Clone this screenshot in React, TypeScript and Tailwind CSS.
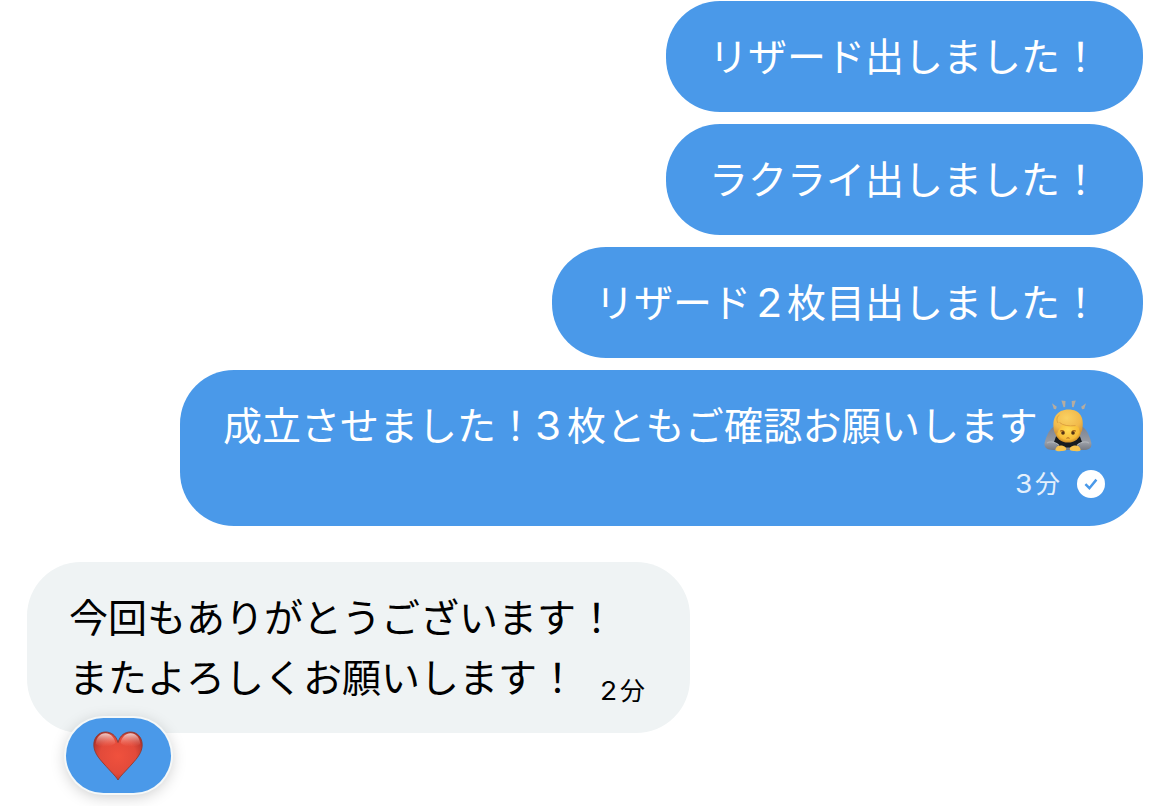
import type { ReactNode } from 'react'

function Digit({ children, className }: { children: ReactNode; className: string }) {
  return <span className={`inline-block origin-left scale-x-108 font-['Inter'] ${className}`}>{children}</span>
}

function SentBubble({ children, className }: { children: ReactNode; className: string }) {
  return (
    <div className={`rounded-[54px] bg-[#4a99e9] pl-[43px] text-[39px] text-white ${className}`}>
      {children}
    </div>
  )
}

function BowingEmoji() {
  return (
    <svg width="48" height="52" viewBox="0 0 48 52" className="shrink-0" aria-hidden="true">
      <defs>
        <radialGradient id="hair" cx="0.45" cy="0.35" r="0.75">
          <stop offset="0" stopColor="#fad162" />
          <stop offset="0.65" stopColor="#f1b94b" />
          <stop offset="1" stopColor="#d09338" />
        </radialGradient>
        <radialGradient id="skin" cx="0.5" cy="0.45" r="0.6">
          <stop offset="0" stopColor="#ffdb55" />
          <stop offset="0.7" stopColor="#f6bb37" />
          <stop offset="1" stopColor="#b97722" />
        </radialGradient>
        <linearGradient id="sleeve" x1="0" y1="0" x2="0" y2="1">
          <stop offset="0" stopColor="#7b8290" />
          <stop offset="0.7" stopColor="#999da5" />
          <stop offset="1" stopColor="#747983" />
        </linearGradient>
      </defs>
      <g fill="#b5aca0">
        <path d="M8 3.3l4.8 3.4-.8 2.6-2.2-.4z" />
        <path d="M17.4.5l4.1.4-.4 6.2-1.6.2z" />
        <path d="M27.7.9l4.1-.4-2.1 6.8-1.6-.2z" />
        <path d="M42 3.3l-4.8 3.4.8 2.6 2.2-.4z" />
      </g>
      <path d="M11 26C6 28 2.5 35 .6 43c-.8 5 2.7 7 8 7h30.8c5.5 0 8.7-2 7.9-7C45.5 35 42 28 37 26z" fill="url(#sleeve)" />
      <path d="M12 36.5h24l2 5.5-6 5.5H16L10 42z" fill="#171b20" />
      <path d="M3 43c4-2 8-1 12 2.5M45 43c-4-2-8-1-12 2.5" stroke="#aeb2b8" strokeWidth="1.2" fill="none" />
      <ellipse cx="24" cy="31" rx="13" ry="11.5" fill="url(#skin)" />
      <path
        d="M10.4 32C7 18 13 9.5 24.5 9.5S41 18 38 30.5c-.6 2.6-2 2-2.6-.7-.4-2.7-1.8-3.8-4.6-4-5.5-.1-9.5-.8-12.8-1-.2 2.5-3.3 4-4.2 7.2-.6 2.2-2.8 2.2-3.4 0z"
        fill="url(#hair)"
      />
      <path d="M14 23c-2-3.4-1-6.4 1.4-8M15.5 22.5c3.5 3 9 3.9 16 3.1" stroke="#d6973b" strokeWidth="0.8" fill="none" />
      <path d="M16.2 31.2c1.5-.8 3-.4 4 .8M31.8 31.2c-1.5-.8-3-.4-4 .8" stroke="#a76316" strokeWidth="1.2" fill="none" />
      <ellipse cx="19" cy="33" rx="1.8" ry="1.8" fill="#543316" />
      <ellipse cx="29" cy="33" rx="1.8" ry="1.8" fill="#543316" />
      <path d="M22.5 38.3c1-.6 2-.6 3 0" stroke="#a65f1c" strokeWidth="1" fill="none" />
      <path d="M11.6 48.8c.8-2.8 4-4 7.2-3 2.6.7 4.1 2.4 3.3 4-.7 1.5-3 .9-5 1.3-3.3.5-6.6.2-5.5-2.3z" fill="#f8c34d" />
      <path d="M36.4 48.8c-.8-2.8-4-4-7.2-3-2.6.7-4.1 2.4-3.3 4 .7 1.5 3 .9 5 1.3 3.3.5 6.6.2 5.5-2.3z" fill="#f8c34d" />
    </svg>
  )
}

function HeartEmoji() {
  return (
    <svg width="50" height="50" viewBox="0 0 50 50" aria-hidden="true">
      <defs>
        <radialGradient id="heart" cx="0.5" cy="0.5" r="0.62">
          <stop offset="0" stopColor="#f0513d" />
          <stop offset="0.6" stopColor="#e24a3a" />
          <stop offset="1" stopColor="#a92e27" />
        </radialGradient>
        <linearGradient id="shine" x1="0" y1="0" x2="0" y2="1">
          <stop offset="0" stopColor="#fff" stopOpacity="0.75" />
          <stop offset="1" stopColor="#ff8a78" stopOpacity="0" />
        </linearGradient>
      </defs>
      <path
        d="M25 49C22.8 45.2 17 39.8 11 33 5.5 26.8.8 21.3.8 13.8.8 6.5 5.7 1 12.5 1 18.2 1 23 4.3 25 11.5 27 4.3 31.8 1 37.5 1 44.3 1 49.2 6.5 49.2 13.8c0 7.5-4.7 13-10.2 19.2C33 39.8 27.2 45.2 25 49z"
        fill="url(#heart)"
        stroke="#91392f"
        strokeWidth="0.9"
      />
      <path d="M2.8 13C3.2 6.5 7 2.3 12.5 2.3c5 0 8.5 3.5 10 9.7-4 4-15.2 5.5-19.7 1z" fill="url(#shine)" />
      <path d="M47.2 13C46.8 6.5 43 2.3 37.5 2.3c-5 0-8.5 3.5-10 9.7 4 4 15.2 5.5 19.7 1z" fill="url(#shine)" />
    </svg>
  )
}

function SentBadge() {
  return (
    <svg width="28" height="28" viewBox="0 0 28 28" aria-hidden="true">
      <circle cx="14" cy="14" r="14" fill="white" />
      <path d="M8.4 14.2l4 4 7-8.6" fill="none" stroke="#4a99e9" strokeWidth="2.5" />
    </svg>
  )
}

export default function App() {
  return (
    <main className="h-[806px] w-[1170px] overflow-hidden bg-white pt-px font-['Noto_Sans_CJK_JP',sans-serif] whitespace-nowrap">
      <section className="mr-[27px] flex flex-col items-end gap-3">
        <SentBubble className="h-[111px] w-[477px] leading-[107px]">
          リザード出しました<span className="ml-px">！</span>
        </SentBubble>
        <SentBubble className="h-[111px] w-[477px] leading-[107px]">
          ラクライ出しました<span className="ml-px">！</span>
        </SentBubble>
        <SentBubble className="h-[111px] w-[591px] leading-[107px]">
          リザード<Digit className="w-[36px] pl-[5px]">2</Digit>枚目出しました<span className="ml-px">！</span>
        </SentBubble>
        <SentBubble className="h-[156px] w-[963px] pt-[26px]">
          <div className="flex h-[60px] items-center">
            <p className="-mt-1 mr-[6px] leading-[56px]">
              成立させました！<Digit className="mr-[-2px] w-[34px]">3</Digit>
              <span className="tracking-[0.25px]">枚ともご確認お願いします</span>
            </p>
            <BowingEmoji />
          </div>
          <div className="mr-[38px] flex h-14 items-center justify-end text-[25px]">
            <p className="-mt-px mr-[17px] text-[#e4f0fc]">
              <Digit className="w-[20px] text-[26px]">3</Digit>分
            </p>
            <SentBadge />
          </div>
        </SentBubble>
      </section>

      <section className="relative mt-9 ml-[27px] w-[663px]">
        <div className="h-[171px] rounded-[54px] bg-[#eff3f4] pt-[23px] pl-[42px] text-[39px] leading-[60px] text-black">
          <p>
            今回もありがとうございます<span className="ml-px">！</span>
          </p>
          <div className="flex">
            <p>
              またよろしくお願いします<span className="ml-px">！</span>
            </p>
            <p className="mt-[14px] ml-[23px] text-[25px]">
              <Digit className="w-[20px] text-[26px]">2</Digit>分
            </p>
          </div>
        </div>
        <div className="absolute top-[156px] left-[39px] flex h-[75px] w-[105px] items-center justify-center rounded-full bg-[#4a99e9] pr-[2px] shadow-[0_0_0_2px_#f5f8f8,0_3px_16px_rgba(0,0,0,0.22)]">
          <HeartEmoji />
        </div>
      </section>
    </main>
  )
}
